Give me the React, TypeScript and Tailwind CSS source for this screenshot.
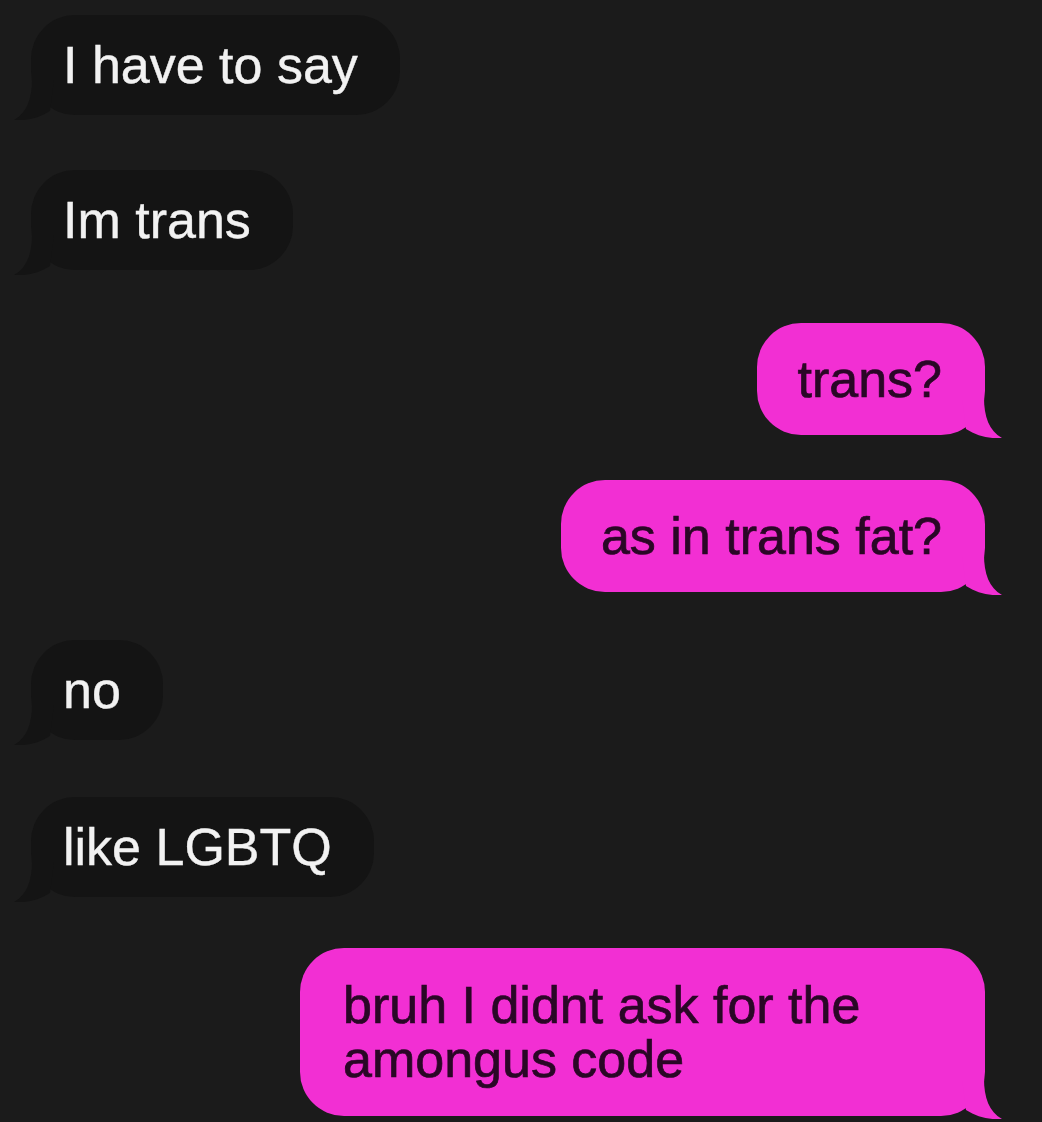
import React from 'react';

type Msg = { from: 'them' | 'me'; text: string[]; mt: string; wide?: boolean };

const MESSAGES: Msg[] = [
  { from: 'them', text: ['I have to say'], mt: 'mt-[15px]' },
  { from: 'them', text: ['Im trans'], mt: 'mt-[55px]' },
  { from: 'me', text: ['trans?'], mt: 'mt-[53px]' },
  { from: 'me', text: ['as in trans fat?'], mt: 'mt-[45px]' },
  { from: 'them', text: ['no'], mt: 'mt-[48px]' },
  { from: 'them', text: ['like LGBTQ'], mt: 'mt-[57px]' },
  { from: 'me', text: ['bruh I didnt ask for the', 'amongus code'], mt: 'mt-[51px]', wide: true },
];

function Tail({ side }: { side: 'left' | 'right' }) {
  if (side === 'right') {
    return (
      <svg
        className="absolute -right-[17px] -bottom-[3px] w-[40px] h-[40px]"
        viewBox="0 0 40 40"
      >
        <path d="M0 0 L22 0 C22 18 27 33 40 40 C27 41 15 38 4 31 Z" fill="#f22fd3" />
      </svg>
    );
  }
  return (
    <svg
      className="absolute -left-[17px] -bottom-[5px] w-[40px] h-[40px]"
      viewBox="0 0 40 40"
    >
      <path d="M40 0 L18 0 C18 18 13 33 0 40 C13 41 25 38 36 31 Z" fill="#141414" />
    </svg>
  );
}

function Bubble({ msg }: { msg: Msg }) {
  const mine = msg.from === 'me';
  return (
    <div className={`flex ${mine ? 'justify-end' : 'justify-start'} ${msg.mt}`}>
      <div
        className={`relative rounded-[44px] ${
          mine
            ? `bg-[#f22fd3] text-[#2a0726] [-webkit-text-stroke:0.7px_#2a0726] ${msg.wide ? 'w-[685px] pl-[43px] py-[30px] leading-[54px]' : 'pl-[40px] pr-[43px] py-[26px] leading-[60px]'}`
            : 'bg-[#141414] text-[#f2f2f2] [-webkit-text-stroke:0.4px_#f2f2f2] pl-[32px] pr-[42px] py-[20px] leading-[60px]'
        }`}
      >
        {msg.text.map((line, i) => (
          <div key={i} className="whitespace-nowrap">
            {line}
          </div>
        ))}
        <Tail side={mine ? 'right' : 'left'} />
      </div>
    </div>
  );
}

export default function App() {
  return (
    <div className="w-[1042px] h-[1122px] overflow-hidden bg-[#1b1b1b] pl-[31px] pr-[57px] font-['Liberation_Sans',Arial,sans-serif] text-[52px]">
      {MESSAGES.map((m, i) => (
        <Bubble key={i} msg={m} />
      ))}
    </div>
  );
}
